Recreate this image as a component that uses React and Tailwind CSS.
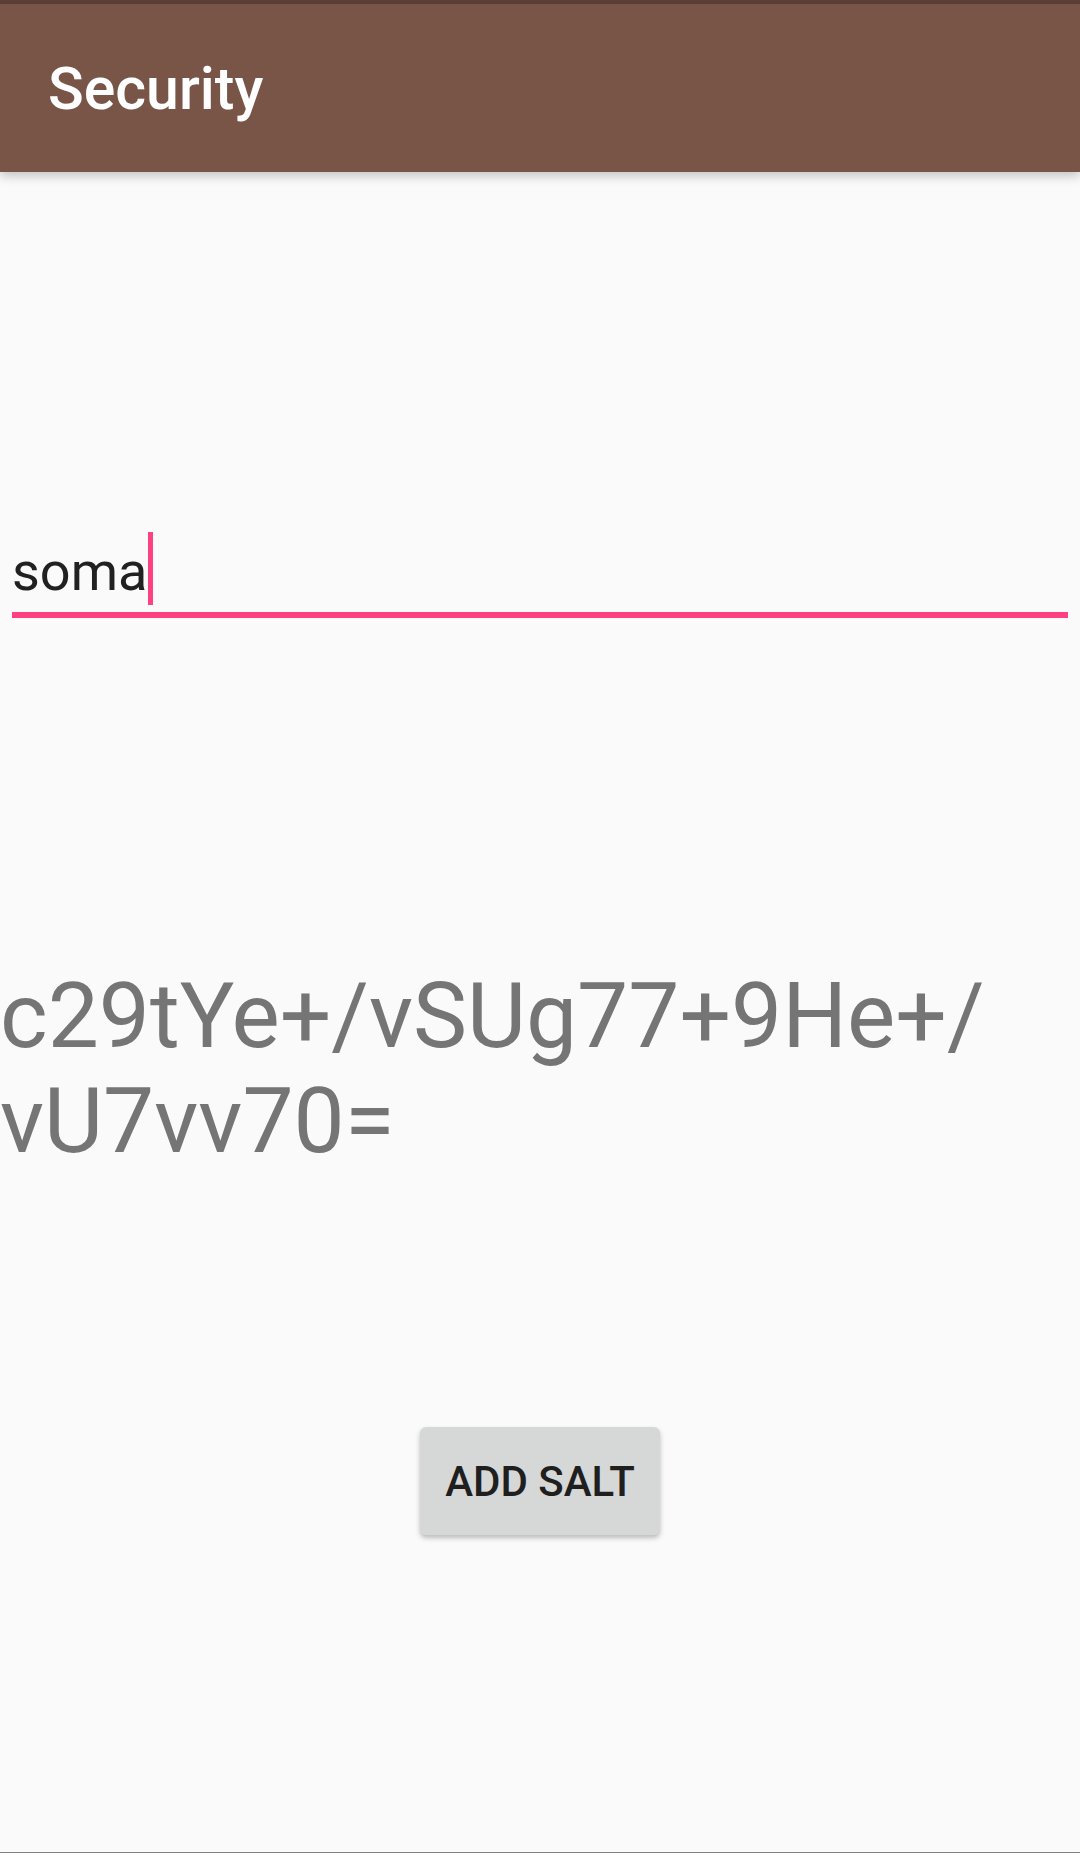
import React from 'react';

export default function App() {
  return (
    <div
      className="h-[1853px] bg-[#fafafa] border-b border-[#808080] flex flex-col overflow-hidden"
      style={{ fontFamily: 'Roboto, "Noto Sans", sans-serif' }}
    >
      {/* Status strip */}
      <div className="h-[4px] bg-[#5d4037]" />

      {/* App bar */}
      <div className="relative z-10 h-[168px] bg-[#795548] shadow-[0_4px_10px_rgba(0,0,0,0.22)] flex items-center pl-[48px]">
        <h1 className="text-[59px] leading-[70px] font-medium text-white mt-[1px]">Security</h1>
      </div>

      {/* Input */}
      <div className="mt-[368px]">
        <div className="flex items-start pl-[12px] h-[64px]">
          <span className="text-[54px] leading-[64px] text-[#212121]">soma</span>
          <div className="mt-[-8px] ml-[1px] w-[5px] h-[73px] bg-[#ff4081]" />
        </div>
        <div className="mt-[8px] mx-[12px] h-[6px] bg-[#ff4081]" />
      </div>

      {/* Hash output */}
      <div className="mt-[346px] text-[91px] leading-[105px] text-[#757575] whitespace-nowrap">
        <div>c29tYe+/vSUg77+9He+/</div>
        <div>vU7vv70=</div>
      </div>

      {/* Button */}
      <div className="mt-[253px] flex justify-center">
        <button className="w-[240px] h-[108px] rounded-[6px] bg-[#d6d7d7] shadow-[0_3px_5px_rgba(0,0,0,0.25)] text-[42px] font-medium text-[#1f1f1f] uppercase">
          Add Salt
        </button>
      </div>
    </div>
  );
}
